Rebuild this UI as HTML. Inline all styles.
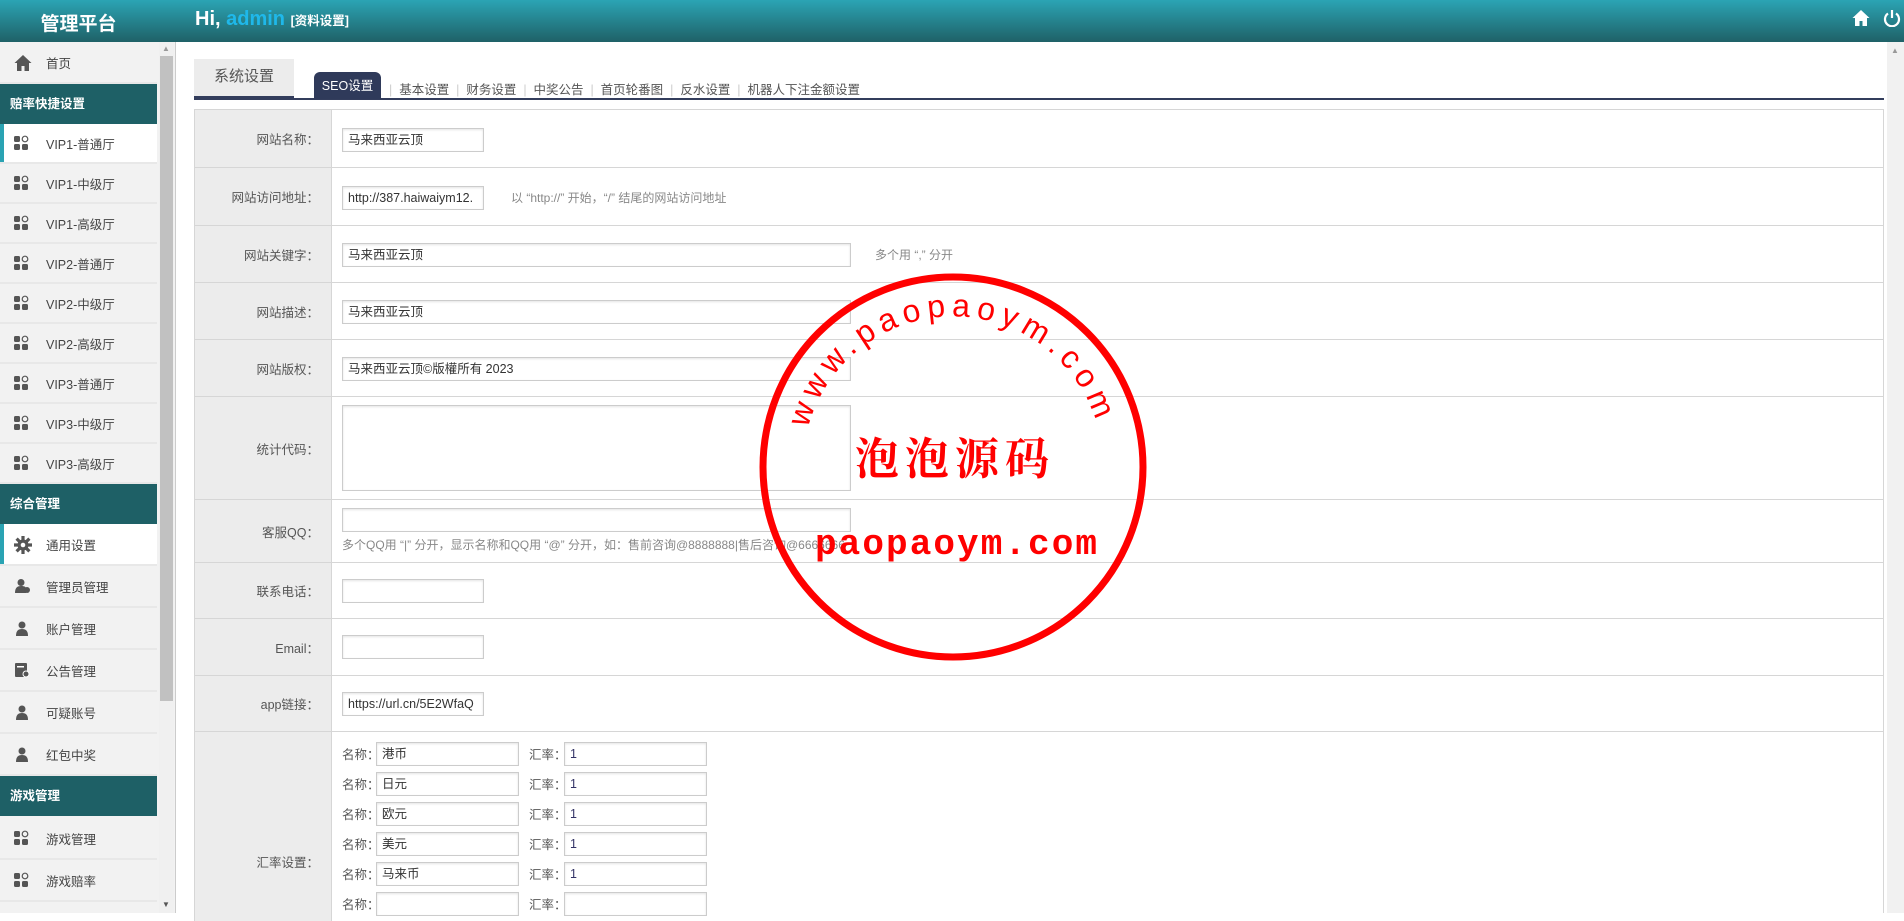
<!DOCTYPE html>
<html><head><meta charset="utf-8"><style>
*{margin:0;padding:0;box-sizing:border-box}
body{width:1904px;height:913px;overflow:hidden;background:#fff;font-family:"Liberation Sans","Noto Sans CJK SC",sans-serif;font-size:12px;color:#333;position:relative}
.hdr{position:absolute;left:0;top:0;width:1904px;height:42px;background:linear-gradient(#2ba4b4,#1f6167)}
.abs{position:absolute}
.side{position:absolute;left:0;top:42px;width:176px;height:871px;background:#f2f2f2;border-right:1px solid #ccc}
.it{position:absolute;left:0;width:157px;border-bottom:2px solid #e8e8e8;font-size:12.5px;color:#444;display:flex;align-items:center}
.it span.t{position:absolute;left:46px}
.sec{position:absolute;left:0;width:157px;height:40px;background:#1e6066;color:#fff;font-weight:bold;font-size:12.5px;padding-left:10px;line-height:40px}
.ic{position:absolute;left:14px;width:16px;height:16px}
.row{position:absolute;left:194px;width:1690px;border-top:1px solid #d6d6d6}
.lab{position:absolute;left:0;top:0;bottom:0;width:137px;background:#ececec;border-right:1px solid #d6d6d6;text-align:right;padding-right:12px;font-size:12.5px;color:#555;display:flex;align-items:center;justify-content:flex-end}
.inp{position:absolute;height:24px;border:1px solid #ccc;box-shadow:inset 0 1px 2px #e4e4e4;background:#fff;font-size:12.5px;padding-left:5px;line-height:22px;color:#333;overflow:hidden;white-space:nowrap}
.hint{position:absolute;font-size:12px;color:#888}
</style></head><body>
<div class="hdr">
 <div class="abs" style="left:0;width:157px;top:9px;text-align:center;color:#fff;font-size:19px;font-weight:bold">管理平台</div>
 <div class="abs" style="left:195px;top:8px;color:#fff;font-size:20px;font-weight:bold">Hi, <span style="color:#1fb8ea">admin</span> <span style="font-size:12.5px;font-weight:bold">[资料设置]</span></div>
 <svg class="abs" style="left:1852px;top:9px" width="18" height="18" viewBox="0 0 18 18"><path d="M9 1L0.5 9H3v8h4.5v-5h3v5H15V9h2.5z" fill="#fff"/></svg>
 <svg class="abs" style="left:1883px;top:9px" width="18" height="18" viewBox="0 0 18 18"><path d="M5 4.5A7 7 0 1 0 13 4.5" fill="none" stroke="#fff" stroke-width="2.2"/><path d="M9 1v8" stroke="#fff" stroke-width="2.2"/></svg>
</div>

<div class="side">
 <div class="abs" style="left:159px;top:0;width:15px;height:871px;background:#f0f0f0"></div>
 <div class="abs" style="left:160px;top:14px;width:13px;height:645px;background:#c1c1c1"></div>
 <div class="abs" style="left:162px;top:2px;font-size:8px;color:#999">▲</div>
 <div class="abs" style="left:162px;top:858px;font-size:8px;color:#555">▼</div>
</div>
<div id="sb"></div>

<div class="abs" style="left:194px;top:59px;width:100px;height:38px;background:#ececec;font-size:15px;color:#555;text-align:center;line-height:36px">系统设置</div>
<div class="abs" style="left:194px;top:96px;width:100px;height:4px;background:#333d5c"></div>
<div class="abs" style="left:194px;top:98px;width:1690px;height:2px;background:#333d5c"></div>
<div class="abs" style="left:314px;top:72px;width:67px;height:27px;background:#2f3a5a;border-radius:6px 6px 0 0;color:#fff;font-size:12.5px;text-align:center;line-height:28px">SEO设置</div>
<div class="abs" style="left:389px;top:79px;font-size:12.5px;color:#555;white-space:nowrap;word-spacing:0">
<span style="color:#ccc">|</span>&nbsp; 基本设置 &nbsp;<span style="color:#ccc">|</span>&nbsp; 财务设置 &nbsp;<span style="color:#ccc">|</span>&nbsp; 中奖公告 &nbsp;<span style="color:#ccc">|</span>&nbsp; 首页轮番图 &nbsp;<span style="color:#ccc">|</span>&nbsp; 反水设置 &nbsp;<span style="color:#ccc">|</span>&nbsp; 机器人下注金额设置</div>

<div class="row" style="top:109px;height:58px;border-left:1px solid #d6d6d6"><div class="lab">网站名称：</div><div class="inp" style="left:147px;top:18px;width:142px">马来西亚云顶</div></div>
<div class="row" style="top:167px;height:58px;border-left:1px solid #d6d6d6"><div class="lab">网站访问地址：</div><div class="inp" style="left:147px;top:18px;width:142px">http://387.haiwaiym12.</div><div class="hint" style="left:316px;top:21px">以 “http://” 开始，“/” 结尾的网站访问地址</div></div>
<div class="row" style="top:225px;height:57px;border-left:1px solid #d6d6d6"><div class="lab">网站关键字：</div><div class="inp" style="left:147px;top:17px;width:509px">马来西亚云顶</div><div class="hint" style="left:680px;top:20px">多个用 “,” 分开</div></div>
<div class="row" style="top:282px;height:57px;border-left:1px solid #d6d6d6"><div class="lab">网站描述：</div><div class="inp" style="left:147px;top:17px;width:509px">马来西亚云顶</div></div>
<div class="row" style="top:339px;height:57px;border-left:1px solid #d6d6d6"><div class="lab">网站版权：</div><div class="inp" style="left:147px;top:17px;width:509px">马来西亚云顶©版權所有 2023</div></div>
<div class="row" style="top:396px;height:103px;border-left:1px solid #d6d6d6"><div class="lab">统计代码：</div><div class="inp" style="left:147px;top:8px;width:509px;height:86px"></div></div>
<div class="row" style="top:499px;height:63px;border-left:1px solid #d6d6d6"><div class="lab">客服QQ：</div><div class="inp" style="left:147px;top:8px;width:509px"></div><div class="hint" style="left:147px;top:36px">多个QQ用 “|” 分开，显示名称和QQ用 “@” 分开，如：售前咨询@8888888|售后咨询@6666666</div></div>
<div class="row" style="top:562px;height:56px;border-left:1px solid #d6d6d6"><div class="lab">联系电话：</div><div class="inp" style="left:147px;top:16px;width:142px"></div></div>
<div class="row" style="top:618px;height:57px;border-left:1px solid #d6d6d6"><div class="lab">Email：</div><div class="inp" style="left:147px;top:16px;width:142px"></div></div>
<div class="row" style="top:675px;height:56px;border-left:1px solid #d6d6d6"><div class="lab">app链接：</div><div class="inp" style="left:147px;top:16px;width:142px">https://url.cn/5E2WfaQ</div></div>
<div class="row" style="top:731px;height:190px;border-left:1px solid #d6d6d6"><div class="lab" style="align-items:flex-start;padding-top:120px">汇率设置：</div>
<div id="fx"></div></div>
<div class="abs" style="left:1883px;top:109px;width:1px;height:804px;background:#d6d6d6"></div>
<div class="abs" style="left:1887px;top:42px;width:17px;height:871px;background:#f1f1f1"></div>
<div class="abs" style="left:1891px;top:46px;font-size:8px;color:#999">▲</div>

<svg class="abs" style="left:0;top:0" width="1904" height="913" viewBox="0 0 1904 913">
 <circle cx="953" cy="467" r="190" fill="none" stroke="#f00" stroke-width="7"/>
 <path id="arc" d="M808,428 A150,150 0 0 1 1098,428" fill="none"/>
 <text font-family="Liberation Sans,sans-serif" font-size="32" fill="#f00"><textPath href="#arc" textLength="385" lengthAdjust="spacing">www.paopaoym.com</textPath></text>
 <text x="955" y="474" text-anchor="middle" font-family="Noto Serif CJK SC,serif" font-size="44" font-weight="bold" fill="#f00" letter-spacing="6">泡泡源码</text>
 <text x="956" y="554" text-anchor="middle" font-family="Liberation Mono,monospace" font-size="36" font-weight="bold" fill="#f00" textLength="282" lengthAdjust="spacing">paopaoym.com</text>
</svg>

<script>
var sb=document.getElementById('sb'),h='';
function item(top,hh,txt,ic,active){h+='<div class="it" style="top:'+top+'px;height:'+hh+'px;background:'+(active?'#fff':'#f2f2f2')+'">'+(active?'<div class="abs" style="left:0;top:0;width:4px;height:100%;background:#2aa3b3"></div>':'')+'<div class="ic" style="top:'+(hh/2-9)+'px">'+ic+'</div><span class="t">'+txt+'</span></div>';}
function sec(top,txt){h+='<div class="sec" style="top:'+top+'px">'+txt+'</div>';}
var grid='<svg width="16" height="16"><rect x="0" y="1" width="6" height="6" rx="1.5" fill="#555"/><circle cx="11" cy="4" r="2.8" fill="none" stroke="#555" stroke-width="1.2"/><rect x="0" y="9" width="6" height="6" rx="1.5" fill="#555"/><rect x="8" y="9" width="6" height="6" rx="1.5" fill="#555"/></svg>';
var home='<svg width="18" height="18"><path d="M9 1L0.5 9H3v8h4.5v-5h3v5H15V9h2.5z" fill="#555"/></svg>';
var user='<svg width="16" height="16"><circle cx="8" cy="5" r="3.5" fill="#555"/><path d="M2 16c0-5 2-7 6-7s6 2 6 7z" fill="#555"/></svg>';
var gear='<svg width="18" height="18" viewBox="0 0 18 18"><circle cx="9" cy="9" r="5.5" fill="#555"/><g stroke="#555" stroke-width="3.2"><path d="M9 0v18M0 9h18M2.6 2.6l12.8 12.8M15.4 2.6L2.6 15.4"/></g><circle cx="9" cy="9" r="2.3" fill="#fff"/></svg>';
var admin='<svg width="18" height="16"><circle cx="7" cy="4.5" r="3.5" fill="#555"/><path d="M1 15c0-5 2-7 6-7s5 1 5 3v4z" fill="#555"/><circle cx="13" cy="12" r="3" fill="#555"/></svg>';
var note='<svg width="16" height="16"><rect x="1" y="1" width="12" height="14" rx="1" fill="#555"/><rect x="3" y="4" width="7" height="1.5" fill="#fff"/><circle cx="12" cy="12" r="3.5" fill="#fff"/><circle cx="12" cy="12" r="2.5" fill="#555"/></svg>';
item(0,42,'首页',home);
sec(42,'赔率快捷设置');
var v=['VIP1-普通厅','VIP1-中级厅','VIP1-高级厅','VIP2-普通厅','VIP2-中级厅','VIP2-高级厅','VIP3-普通厅','VIP3-中级厅','VIP3-高级厅'];
for(var i=0;i<9;i++)item(82+i*40,40,v[i],grid,i==0);
sec(442,'综合管理');
item(482,42,'通用设置',gear,true);item(524,42,'管理员管理',admin);item(566,42,'账户管理',user);item(608,42,'公告管理',note);item(650,42,'可疑账号',user);item(692,42,'红包中奖',user);
sec(734,'游戏管理');
item(776,42,'游戏管理',grid);item(818,42,'游戏赔率',grid);
var s=document.createElement('div');s.className='abs';s.style.cssText='left:0;top:42px;width:157px;height:871px;overflow:hidden';s.innerHTML=h;sb.appendChild(s);
var fx=document.getElementById('fx'),f='',n=['港币','日元','欧元','美元','马来币',''];
for(var j=0;j<6;j++){var t=10+j*30;f+='<div class="hint" style="left:147px;top:'+(t+2)+'px;color:#555;font-size:12.5px">名称：</div><div class="inp" style="left:181px;top:'+t+'px;width:143px">'+n[j]+'</div><div class="hint" style="left:334px;top:'+(t+2)+'px;color:#555;font-size:12.5px">汇率：</div><div class="inp" style="left:369px;top:'+t+'px;width:143px;color:#336">'+(j<5?'1':'')+'</div>';}
fx.innerHTML=f;
</script>
</body></html>
